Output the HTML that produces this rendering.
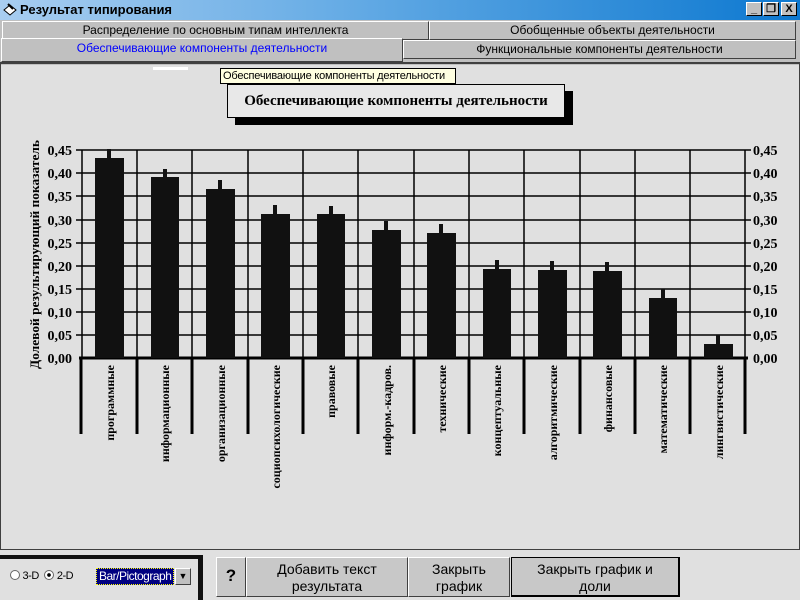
<!DOCTYPE html>
<html><head><meta charset="utf-8"><style>
*{margin:0;padding:0;box-sizing:border-box}
body{width:800px;height:600px;overflow:hidden;background:#e0e0e0;font-family:"Liberation Sans",sans-serif;position:relative}
.abs{position:absolute}
.title{left:0;top:0;width:800px;height:20px;background:linear-gradient(90deg,#a8cdf0 0%,#6aaee6 40%,#0c78d0 100%);}
.title span{position:absolute;left:20px;top:2px;font-weight:bold;font-size:13px;color:#000}
.wb{top:2px;width:16px;height:14px;background:#c0c0c0;border:1px solid;border-color:#fff #000 #000 #fff;font-size:11px;font-weight:bold;text-align:center;line-height:12px}
.tab{background:#c0c0c0;border:1px solid;border-color:#fff #404040 #404040 #fff;font-size:12px;text-align:center;line-height:17px;color:#000;white-space:nowrap}
.btn{background:#c8c8c8;border:1px solid;border-color:#fff #404040 #404040 #fff;font-size:14px;text-align:center;line-height:17px;top:557px;height:40px;padding-top:3px}
</style></head><body>
<div class="abs title"><svg class="abs" style="left:2px;top:2px" width="16" height="16"><path d="M2 8 L8 3 L14 8 L8 13Z" fill="#fff" stroke="#000"/><path d="M6 2 L11 7" stroke="#000" stroke-width="2"/></svg><span>Результат типирования</span>
<div class="abs wb" style="left:746px">_</div><div class="abs wb" style="left:763px">&#x2750;</div><div class="abs wb" style="left:781px">X</div></div>
<div class="abs" style="left:0;top:20px;width:800px;height:45px;background:#c0c0c0"></div>
<div class="abs tab" style="left:2px;top:21px;width:427px;height:19px">Распределение по основным типам интеллекта</div>
<div class="abs tab" style="left:429px;top:21px;width:367px;height:19px">Обобщенные объекты деятельности</div>
<div class="abs tab" style="left:1px;top:38px;width:402px;height:24px;color:#0000ff;line-height:18px">Обеспечивающие компоненты деятельности</div>
<div class="abs tab" style="left:403px;top:40px;width:393px;height:19px">Функциональные компоненты деятельности</div>
<div class="abs" style="left:0;top:62px;width:800px;height:2px;background:#404040"></div>
<div class="abs" style="left:0;top:64px;width:800px;height:486px;border-left:1px solid #404040;border-right:1px solid #404040;border-bottom:1px solid #404040"></div>
<div class="abs" style="left:153px;top:67px;width:35px;height:3px;background:#fff"></div>
<div class="abs" style="left:235px;top:91px;width:338px;height:34px;background:#000"></div>
<div class="abs" style="left:227px;top:84px;width:338px;height:34px;background:#e8e8e8;border:1px solid #000;font-family:'Liberation Serif',serif;font-weight:bold;font-size:15px;line-height:32px;text-align:center">Обеспечивающие компоненты деятельности</div>
<div class="abs" style="left:220px;top:68px;width:236px;height:16px;background:#ffffe1;border:1px solid #000;font-size:11px;line-height:14px;padding-left:2px;white-space:nowrap;overflow:hidden;letter-spacing:-0.2px">Обеспечивающие компоненты деятельности</div>
<svg class="abs" style="left:0;top:0" width="800" height="600" font-family="Liberation Serif,serif" font-weight="bold">
<g stroke="#000" stroke-width="1.5">
<line x1="82" y1="150" x2="745" y2="150"/><line x1="82" y1="173" x2="745" y2="173"/><line x1="82" y1="196" x2="745" y2="196"/><line x1="82" y1="220" x2="745" y2="220"/><line x1="82" y1="243" x2="745" y2="243"/><line x1="82" y1="266" x2="745" y2="266"/><line x1="82" y1="289" x2="745" y2="289"/><line x1="82" y1="312" x2="745" y2="312"/><line x1="82" y1="335" x2="745" y2="335"/>
<line x1="76" y1="150" x2="82" y2="150"/><line x1="76" y1="173" x2="82" y2="173"/><line x1="76" y1="196" x2="82" y2="196"/><line x1="76" y1="220" x2="82" y2="220"/><line x1="76" y1="243" x2="82" y2="243"/><line x1="76" y1="266" x2="82" y2="266"/><line x1="76" y1="289" x2="82" y2="289"/><line x1="76" y1="312" x2="82" y2="312"/><line x1="76" y1="335" x2="82" y2="335"/>
<line x1="745" y1="150" x2="751" y2="150"/><line x1="745" y1="173" x2="751" y2="173"/><line x1="745" y1="196" x2="751" y2="196"/><line x1="745" y1="220" x2="751" y2="220"/><line x1="745" y1="243" x2="751" y2="243"/><line x1="745" y1="266" x2="751" y2="266"/><line x1="745" y1="289" x2="751" y2="289"/><line x1="745" y1="312" x2="751" y2="312"/><line x1="745" y1="335" x2="751" y2="335"/>
<line x1="82" y1="150" x2="82" y2="358"/><line x1="137" y1="150" x2="137" y2="358"/><line x1="192" y1="150" x2="192" y2="358"/><line x1="248" y1="150" x2="248" y2="358"/><line x1="303" y1="150" x2="303" y2="358"/><line x1="358" y1="150" x2="358" y2="358"/><line x1="414" y1="150" x2="414" y2="358"/><line x1="469" y1="150" x2="469" y2="358"/><line x1="524" y1="150" x2="524" y2="358"/><line x1="580" y1="150" x2="580" y2="358"/><line x1="635" y1="150" x2="635" y2="358"/><line x1="690" y1="150" x2="690" y2="358"/><line x1="745" y1="150" x2="745" y2="358"/>
</g>
<g stroke="#000" stroke-width="3">
<line x1="79" y1="358" x2="748" y2="358"/>
<line x1="81" y1="358" x2="81" y2="434"/><line x1="137" y1="358" x2="137" y2="434"/><line x1="192" y1="358" x2="192" y2="434"/><line x1="248" y1="358" x2="248" y2="434"/><line x1="303" y1="358" x2="303" y2="434"/><line x1="358" y1="358" x2="358" y2="434"/><line x1="414" y1="358" x2="414" y2="434"/><line x1="469" y1="358" x2="469" y2="434"/><line x1="524" y1="358" x2="524" y2="434"/><line x1="580" y1="358" x2="580" y2="434"/><line x1="635" y1="358" x2="635" y2="434"/><line x1="690" y1="358" x2="690" y2="434"/><line x1="745" y1="358" x2="745" y2="434"/>
</g>
<g fill="#111">
<rect x="95" y="158" width="29" height="200"/><rect x="107" y="149" width="4" height="10"/>
<rect x="151" y="177" width="28" height="181"/><rect x="163" y="169" width="4" height="9"/>
<rect x="206" y="189" width="29" height="169"/><rect x="218" y="180" width="4" height="10"/>
<rect x="261" y="214" width="29" height="144"/><rect x="273" y="205" width="4" height="10"/>
<rect x="317" y="214" width="28" height="144"/><rect x="329" y="206" width="4" height="9"/>
<rect x="372" y="230" width="29" height="128"/><rect x="384" y="221" width="4" height="10"/>
<rect x="427" y="233" width="29" height="125"/><rect x="439" y="224" width="4" height="10"/>
<rect x="483" y="269" width="28" height="89"/><rect x="495" y="260" width="4" height="10"/>
<rect x="538" y="270" width="29" height="88"/><rect x="550" y="261" width="4" height="10"/>
<rect x="593" y="271" width="29" height="87"/><rect x="605" y="262" width="4" height="10"/>
<rect x="649" y="298" width="28" height="60"/><rect x="661" y="289" width="4" height="10"/>
<rect x="704" y="344" width="29" height="14"/><rect x="716" y="335" width="4" height="10"/>
</g>
<g font-size="14" text-anchor="end">
<text x="72" y="155">0,45</text><text x="72" y="178">0,40</text><text x="72" y="201">0,35</text><text x="72" y="225">0,30</text><text x="72" y="248">0,25</text><text x="72" y="271">0,20</text><text x="72" y="294">0,15</text><text x="72" y="317">0,10</text><text x="72" y="340">0,05</text><text x="72" y="363">0,00</text>
</g>
<g font-size="14">
<text x="753" y="155">0,45</text><text x="753" y="178">0,40</text><text x="753" y="201">0,35</text><text x="753" y="225">0,30</text><text x="753" y="248">0,25</text><text x="753" y="271">0,20</text><text x="753" y="294">0,15</text><text x="753" y="317">0,10</text><text x="753" y="340">0,05</text><text x="753" y="363">0,00</text>
</g>
<text transform="translate(39,369) rotate(-90)" font-size="13" textLength="229" lengthAdjust="spacingAndGlyphs">Долевой результирующий показатель</text>
<g font-size="12" text-anchor="end">
<text transform="translate(114,365) rotate(-90)">программные</text>
<text transform="translate(169,365) rotate(-90)">информационные</text>
<text transform="translate(225,365) rotate(-90)">организационные</text>
<text transform="translate(280,365) rotate(-90)">социопсихологические</text>
<text transform="translate(335,365) rotate(-90)">правовые</text>
<text transform="translate(391,365) rotate(-90)">информ.-кадров.</text>
<text transform="translate(446,365) rotate(-90)">технические</text>
<text transform="translate(501,365) rotate(-90)">концептуальные</text>
<text transform="translate(557,365) rotate(-90)">алгоритмические</text>
<text transform="translate(612,365) rotate(-90)">финансовые</text>
<text transform="translate(667,365) rotate(-90)">математические</text>
<text transform="translate(723,365) rotate(-90)">лингвистические</text>
</g>
</svg>
<div class="abs" style="left:0;top:555px;width:203px;height:4px;background:#111"></div>
<div class="abs" style="left:198px;top:555px;width:5px;height:45px;background:#111"></div>
<div class="abs" style="left:10px;top:570px;font-size:11px;letter-spacing:-0.5px">
<span style="display:inline-block;width:10px;height:10px;border-radius:50%;background:#fff;border:1px solid #666;vertical-align:-1px"></span> 3-D
<span style="display:inline-block;width:10px;height:10px;border-radius:50%;background:radial-gradient(#000 30%,#fff 35%);border:1px solid #666;vertical-align:-1px;margin-left:3px"></span> 2-D</div>
<div class="abs" style="left:96px;top:568px;width:78px;height:17px;background:#000080;color:#fff;font-size:12px;line-height:15px;padding-left:2px;border:1px dotted #ff0;letter-spacing:-0.5px;white-space:nowrap;overflow:hidden">Bar/Pictograph</div>
<div class="abs" style="left:175px;top:568px;width:16px;height:17px;background:#c0c0c0;border:1px solid;border-color:#fff #404040 #404040 #fff;font-size:9px;text-align:center;line-height:15px">▼</div>
<div class="abs btn" style="left:216px;width:30px;font-weight:bold;font-size:17px;line-height:30px;padding-top:3px">?</div>
<div class="abs btn" style="left:246px;width:162px">Добавить текст<br>результата</div>
<div class="abs btn" style="left:408px;width:102px">Закрыть<br>график</div>
<div class="abs btn" style="left:511px;width:169px;border-color:#000 #000 #000 #000;border-width:1px 2px 2px 1px">Закрыть график и<br>доли</div>
</body></html>
